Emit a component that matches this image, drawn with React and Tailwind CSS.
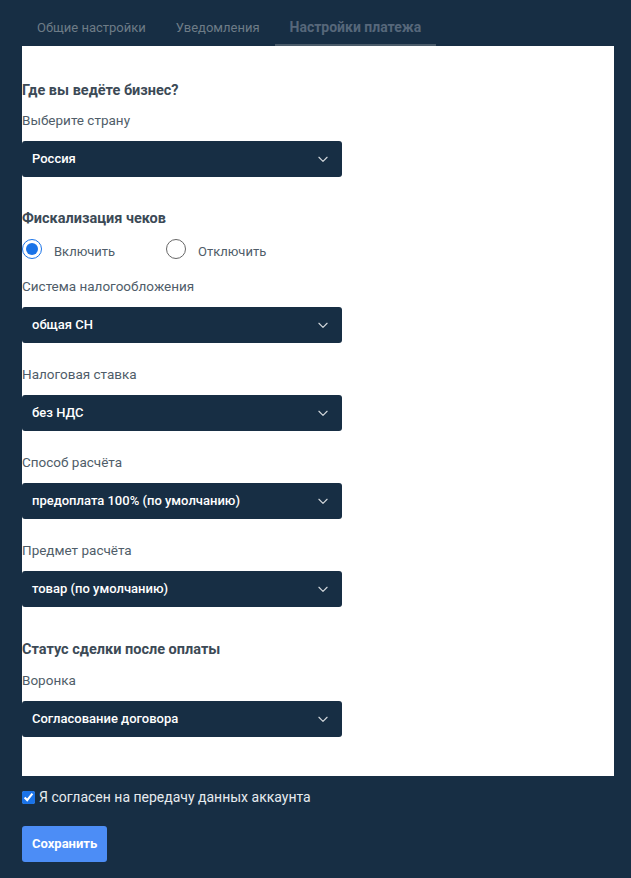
import { useState } from 'react'

const FONT = 'font-[Roboto,"Noto_Sans",sans-serif]'

function Chevron() {
  return (
    <svg className="w-3.5 h-3.5 text-white/80" fill="none" viewBox="0 0 24 24" stroke="currentColor" strokeWidth={2}>
      <path strokeLinecap="round" strokeLinejoin="round" d="m5 9 7 7 7-7" />
    </svg>
  )
}

function Select({ value }) {
  return (
    <div className="w-[320px] h-9 rounded-[3px] bg-[#172e44] flex items-center justify-between pl-[10px] pr-3">
      <span className="text-[13px] font-medium text-white">{value}</span>
      <Chevron />
    </div>
  )
}

function Field({ label, value, className = '' }) {
  return (
    <div className={className}>
      <p className="text-[13.5px] text-[#4f5d69] leading-5">{label}</p>
      <div className="mt-[11px]"><Select value={value} /></div>
    </div>
  )
}

function Radio({ checked, label, onClick, className = '' }) {
  return (
    <button onClick={onClick} className={`flex items-center gap-3 ${className}`}>
      <span className={`w-5 h-5 rounded-full flex items-center justify-center border ${checked ? 'border-[#1a73e8]' : 'border-[#666]'}`}>
        {checked && <span className="w-3 h-3 rounded-full bg-[#1a73e8]" />}
      </span>
      <span className="text-[13px] text-[#4f5d69] mt-1.5">{label}</span>
    </button>
  )
}

export default function App() {
  const [fiscal, setFiscal] = useState(true)
  const tabs = ['Общие настройки', 'Уведомления', 'Настройки платежа']

  return (
    <div className={`${FONT} min-h-[878px] bg-[#172e44] pl-[22px] pr-[17px] pb-4`}>
      {/* Tabs */}
      <div className="flex pt-[10px]">
        {tabs.map((t, i) => (
          <div
            key={t}
            className={`h-9 flex items-center px-[15px] ${i === 2 ? 'text-[14px] font-bold text-[#56677a] border-b-2 border-[#4a5b6a]' : 'text-[13px] text-[#6e7c87]'}`}
          >
            {t}
          </div>
        ))}
      </div>

      {/* Panel */}
      <div className="bg-white h-[730px] pt-[35px]">
        <h3 className="text-[14.5px] font-bold text-[#3c4a56] leading-5">Где вы ведёте бизнес?</h3>
        <Field label="Выберите страну" value="Россия" className="mt-[9px]" />

        <h3 className="mt-[32px] text-[14.5px] font-bold text-[#3c4a56] leading-5">Фискализация чеков</h3>
        <div className="mt-[7px] flex">
          <Radio checked={fiscal} label="Включить" onClick={() => setFiscal(true)} className="w-[144px]" />
          <Radio checked={!fiscal} label="Отключить" onClick={() => setFiscal(false)} />
        </div>

        <Field label="Система налогообложения" value="общая СН" className="mt-[14px]" />
        <Field label="Налоговая ставка" value="без НДС" className="mt-[21px]" />
        <Field label="Способ расчёта" value="предоплата 100% (по умолчанию)" className="mt-[21px]" />
        <Field label="Предмет расчёта" value="товар (по умолчанию)" className="mt-[21px]" />

        <h3 className="mt-[33px] text-[14.5px] font-bold text-[#3c4a56] leading-5">Статус сделки после оплаты</h3>
        <Field label="Воронка" value="Согласование договора" className="mt-[10px]" />
      </div>

      <label className="mt-[11px] flex items-center gap-[4px] text-[14px] text-[#e6ebef]">
        <input type="checkbox" defaultChecked className="w-[13px] h-[13px] accent-[#1a73e8]" />
        Я согласен на передачу данных аккаунта
      </label>

      <button className="mt-[18px] h-9 px-[10px] rounded-[3px] bg-[#4c8df6] text-white text-[13px] font-bold">
        Сохранить
      </button>
    </div>
  )
}
